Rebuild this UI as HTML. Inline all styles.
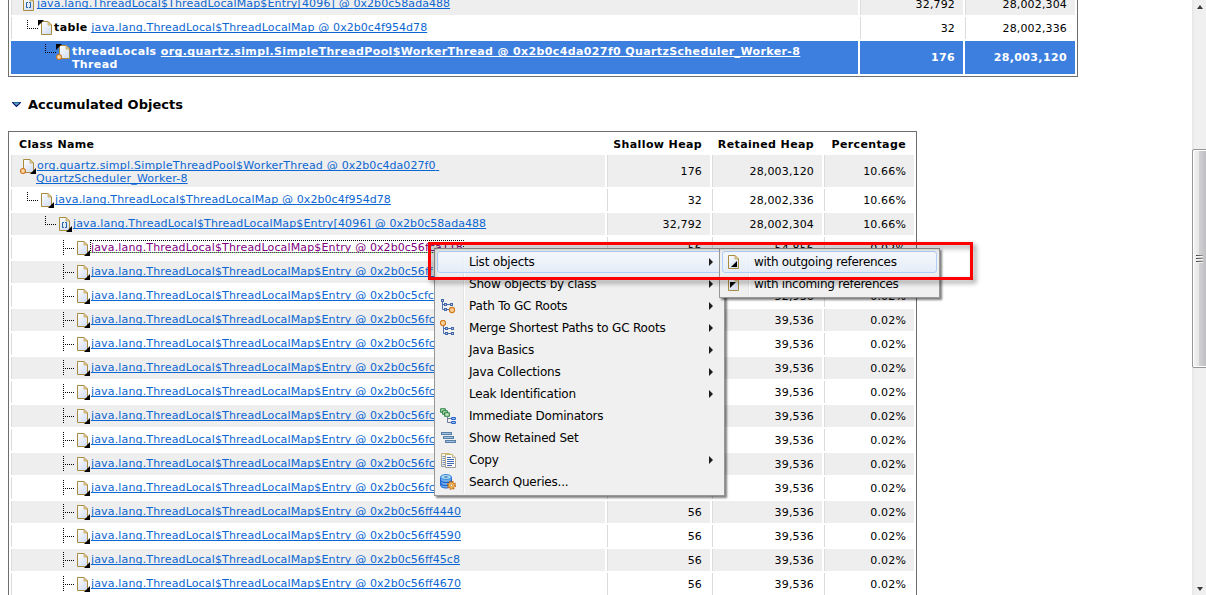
<!DOCTYPE html><html><head><meta charset="utf-8"><title>Accumulated Objects</title><style>
html,body{margin:0;padding:0}
body{width:1206px;height:595px;overflow:hidden;position:relative;background:#fff;font:11px "DejaVu Sans","Liberation Sans",sans-serif;color:#000;letter-spacing:.15px}
table.t{position:absolute;left:8px;border:1px solid #6e6e6e;border-spacing:2px;border-collapse:separate;table-layout:fixed}
#t1{top:-10px;width:1070px}
#t2{top:131px;width:909px}
td,th{padding:0 8px 0 0;border:0;border-left:1px solid #dcdcdc;text-align:right;height:22px;box-sizing:content-box;vertical-align:middle;white-space:nowrap;overflow:hidden}
th{border-color:#fff;font-weight:bold;height:19px;padding-top:1px;box-sizing:border-box;letter-spacing:.37px}
th.l{text-align:left;padding-left:7px}
tr.g td{background:#eee}
tr.two td{height:32px}
#t1 tr.two td{height:33px}
tr.sel td{background:#3d7fdf;border-color:#3d7fdf;color:#fff;font-weight:bold;letter-spacing:.37px}
b{letter-spacing:.37px}
td.n{text-align:left;padding:0 0 0 8px;vertical-align:top}
.c{display:flex;align-items:flex-start;height:16px;margin-top:3px}
tr.two .c{height:26px}
.sp{display:inline-block;flex:none;height:16px}
svg.ic,svg.ln{flex:none;display:block}
.tx{display:block;line-height:13px;padding-top:1px;white-space:nowrap}
a{color:#0c66d2;text-decoration:underline;text-decoration-skip-ink:none;text-underline-offset:1px;text-decoration-thickness:1px}
a.v{color:#800080;position:relative}
a.v::after{content:"";position:absolute;left:0;right:-1px;top:-1px;height:13px;box-sizing:border-box;border:1px dotted #000;border-bottom-color:#5f5}
a.w{letter-spacing:.21px}
.x{letter-spacing:.05px}
tr.sel .x{letter-spacing:inherit}
.tx>a:first-child{padding-left:1px}
tr.sel a{color:#fff}
h2{position:absolute;left:28px;top:97px;margin:0;font:bold 13px "DejaVu Sans","Liberation Sans",sans-serif;letter-spacing:0}
#tri{position:absolute;left:12px;top:102px;display:block}
#menu,#sub{position:absolute;background:#f0f0f0;border:1px solid #979797;padding:2px;box-sizing:border-box;box-shadow:2px 2px 2px rgba(0,0,0,.5);font:12px "DejaVu Sans","Liberation Sans",sans-serif;letter-spacing:-.2px}
#menu{left:434px;top:248px;width:291px;height:248px}
#sub{left:719px;top:248px;width:221px;height:50px;letter-spacing:-.3px}
.gut{position:absolute;left:28px;top:2px;bottom:2px;width:1px;background:#e2e3e3;border-right:1px solid #fff}
.mi{position:relative;height:22px;line-height:21px;box-sizing:border-box;border:1px solid transparent;border-radius:3px}
.mi.hot{border-color:#aecff7;background:linear-gradient(rgba(246,249,254,.8),rgba(226,236,250,.8))}
.ml{position:absolute;left:31px;top:0;white-space:nowrap}
.mic{position:absolute;left:2px;top:2px;width:16px;height:16px}
.mic svg{display:block}
.ar{position:absolute;left:271px;top:6px;width:0;height:0;border-left:4.500px solid #1c1c1c;border-top:4px solid transparent;border-bottom:4px solid transparent}
#red{position:absolute;left:428px;top:242px;width:539px;height:32px;border:3px solid #f00;filter:drop-shadow(3px 3px 2.500px rgba(0,0,0,.42))}
#sb{position:absolute;left:1192px;top:0;width:14px;height:595px;background:linear-gradient(90deg,#e6e6e6,#f0f0f0 3px,#f0f0f0)}
#th{position:absolute;left:0;top:149px;width:16px;height:219px;box-sizing:border-box;border:1px solid #979797;border-radius:2px;background:linear-gradient(90deg,#f5f5f5,#e6e6e6 6px,#d2d2d4 6px,#bcbcc0 14px);box-shadow:inset 1px 1px 0 #fff,inset 0 -1px 0 #fff}
#th i{position:absolute;left:3px;width:7px;height:1px;background:linear-gradient(90deg,#3c3c3c,#9a9a9a);box-shadow:0 1px 0 #f4f4f4}
.sa{position:absolute;left:5px;width:0;height:0;border-left:3.500px solid transparent;border-right:3.500px solid transparent}
#su{top:5px;border-bottom:4px solid #3a3a3a}
#sd{top:587px;border-top:4px solid #3a3a3a}
</style></head><body><svg width="0" height="0" style="position:absolute"><defs>
<linearGradient id="pg" x1="0" y1="0" x2="0.6" y2="1"><stop offset="0" stop-color="#ffffff"/><stop offset="1" stop-color="#d6e0f4"/></linearGradient>
<g id="page"><path d="M3.500 1.500h6.500l3.500 3.500v9.500h-10z" fill="url(#pg)" stroke="#a98b3d"/><path d="M10 1.500v3.500h3.500z" fill="#ecd9a0" stroke="#b89a4a" stroke-width=".7"/></g>
<g id="out"><use href="#page"/><path d="M16 10v6h-6z" fill="#000"/></g>
<g id="in"><use href="#page"/><path d="M0 0h6l-6 6z" fill="#000"/></g>
<g id="dot"><circle cx="3" cy="13" r="2.450" fill="#ffd6a3" stroke="#cb741d" stroke-width="1.100"/></g>
<g id="arr"><path d="M8 6.500H6.500V11.500H8M9 6.500H10.500V11.500H9" stroke="#1f5f9f" stroke-width="1" fill="none"/></g>
<g id="ell"><path d="M7.500 0v9M9 8.500h9" stroke="#000" stroke-width="1" stroke-dasharray="1 1" fill="none"/></g>
<g id="tee"><path d="M7.500 0v16M9 8.500h9" stroke="#000" stroke-width="1" stroke-dasharray="1 1" fill="none"/></g>
</defs></svg><table class="t" id="t1"><colgroup><col><col style="width:103px"><col style="width:110px"></colgroup>
<tr class="g"><td class="n"><div class="c"><span class="sp" style="width:0px"></span><svg class="ic" width="16" height="16" viewBox="0 0 16 16"><use href="#page"/><use href="#arr"/></svg><span class="tx"><a>java.lang.ThreadLocal$ThreadLocalMap$Entry[4096] @ <span class="x">0x2b0c58ada488</span></a></span></div></td><td>32,792</td><td>28,002,304</td></tr>
<tr class="w"><td class="n"><div class="c"><svg class="ln" width="18" height="16" viewBox="0 0 18 16"><use href="#ell"/></svg><svg class="ic" width="16" height="16" viewBox="0 0 16 16"><use href="#in"/></svg><span class="tx"><b>table</b> <a>java.lang.ThreadLocal$ThreadLocalMap @ <span class="x">0x2b0c4f954d78</span></a></span></div></td><td>32</td><td>28,002,336</td></tr>
<tr class="sel two"><td class="n"><div class="c"><span class="sp" style="width:18px"></span><svg class="ln" width="18" height="16" viewBox="0 0 18 16"><use href="#ell"/></svg><svg class="ic" width="16" height="16" viewBox="0 0 16 16"><use href="#in"/><use href="#dot"/></svg><span class="tx"><b>threadLocals</b> <a>org.quartz.simpl.SimpleThreadPool$WorkerThread @ <span class="x">0x2b0c4da027f0</span> QuartzScheduler_Worker-8</a><br><b>Thread</b></span></div></td><td>176</td><td>28,003,120</td></tr>
</table><svg id="tri" width="9" height="5" viewBox="0 0 9 5"><path d="M0 0h9l-4.500 5z" fill="#5aa2ba"/><path d="M0 .500h9" stroke="#1c6c9e"/><path d="M.300 .300l4.200 4.200l4.200-4.200" stroke="#12126e" stroke-width="1.100" fill="none"/></svg><h2>Accumulated Objects</h2><table class="t" id="t2"><colgroup><col><col style="width:103px"><col style="width:110px"><col style="width:90px"></colgroup><tr class="h"><th class="l">Class Name</th><th>Shallow Heap</th><th>Retained Heap</th><th>Percentage</th></tr>
<tr class="g two"><td class="n"><div class="c"><svg class="ic" width="16" height="16" viewBox="0 0 16 16"><use href="#out"/><use href="#dot"/></svg><span class="tx"><a class="w">org.quartz.simpl.SimpleThreadPool$WorkerThread @ <span class="x">0x2b0c4da027f0</span>&nbsp;<br>QuartzScheduler_Worker-8</a></span></div></td><td>176</td><td>28,003,120</td><td>10.66%</td></tr>
<tr class="w"><td class="n"><div class="c"><svg class="ln" width="18" height="16" viewBox="0 0 18 16"><use href="#ell"/></svg><svg class="ic" width="16" height="16" viewBox="0 0 16 16"><use href="#out"/></svg><span class="tx"><a>java.lang.ThreadLocal$ThreadLocalMap @ <span class="x">0x2b0c4f954d78</span></a></span></div></td><td>32</td><td>28,002,336</td><td>10.66%</td></tr>
<tr class="g"><td class="n"><div class="c"><span class="sp" style="width:18px"></span><svg class="ln" width="18" height="16" viewBox="0 0 18 16"><use href="#ell"/></svg><svg class="ic" width="16" height="16" viewBox="0 0 16 16"><use href="#out"/><use href="#arr"/></svg><span class="tx"><a>java.lang.ThreadLocal$ThreadLocalMap$Entry[4096] @ <span class="x">0x2b0c58ada488</span></a></span></div></td><td>32,792</td><td>28,002,304</td><td>10.66%</td></tr>
<tr class="w"><td class="n"><div class="c"><span class="sp" style="width:36px"></span><svg class="ln" width="18" height="16" viewBox="0 0 18 16"><use href="#tee"/></svg><svg class="ic" width="16" height="16" viewBox="0 0 16 16"><use href="#out"/></svg><span class="tx"><a class="v">java.lang.ThreadLocal$ThreadLocalMap$Entry @ <span class="x">0x2b0c56fca118</span></a></span></div></td><td>56</td><td>54,856</td><td>0.02%</td></tr>
<tr class="g"><td class="n"><div class="c"><span class="sp" style="width:36px"></span><svg class="ln" width="18" height="16" viewBox="0 0 18 16"><use href="#tee"/></svg><svg class="ic" width="16" height="16" viewBox="0 0 16 16"><use href="#out"/></svg><span class="tx"><a>java.lang.ThreadLocal$ThreadLocalMap$Entry @ <span class="x">0x2b0c56ff1d40</span></a></span></div></td><td>56</td><td>52,936</td><td>0.02%</td></tr>
<tr class="w"><td class="n"><div class="c"><span class="sp" style="width:36px"></span><svg class="ln" width="18" height="16" viewBox="0 0 18 16"><use href="#tee"/></svg><svg class="ic" width="16" height="16" viewBox="0 0 16 16"><use href="#out"/></svg><span class="tx"><a>java.lang.ThreadLocal$ThreadLocalMap$Entry @ <span class="x">0x2b0c5cfc6ac0</span></a></span></div></td><td>56</td><td>52,936</td><td>0.02%</td></tr>
<tr class="g"><td class="n"><div class="c"><span class="sp" style="width:36px"></span><svg class="ln" width="18" height="16" viewBox="0 0 18 16"><use href="#tee"/></svg><svg class="ic" width="16" height="16" viewBox="0 0 16 16"><use href="#out"/></svg><span class="tx"><a>java.lang.ThreadLocal$ThreadLocalMap$Entry @ <span class="x">0x2b0c56fc0790</span></a></span></div></td><td>56</td><td>39,536</td><td>0.02%</td></tr>
<tr class="w"><td class="n"><div class="c"><span class="sp" style="width:36px"></span><svg class="ln" width="18" height="16" viewBox="0 0 18 16"><use href="#tee"/></svg><svg class="ic" width="16" height="16" viewBox="0 0 16 16"><use href="#out"/></svg><span class="tx"><a>java.lang.ThreadLocal$ThreadLocalMap$Entry @ <span class="x">0x2b0c56fc0ae0</span></a></span></div></td><td>56</td><td>39,536</td><td>0.02%</td></tr>
<tr class="g"><td class="n"><div class="c"><span class="sp" style="width:36px"></span><svg class="ln" width="18" height="16" viewBox="0 0 18 16"><use href="#tee"/></svg><svg class="ic" width="16" height="16" viewBox="0 0 16 16"><use href="#out"/></svg><span class="tx"><a>java.lang.ThreadLocal$ThreadLocalMap$Entry @ <span class="x">0x2b0c56fc0c30</span></a></span></div></td><td>56</td><td>39,536</td><td>0.02%</td></tr>
<tr class="w"><td class="n"><div class="c"><span class="sp" style="width:36px"></span><svg class="ln" width="18" height="16" viewBox="0 0 18 16"><use href="#tee"/></svg><svg class="ic" width="16" height="16" viewBox="0 0 16 16"><use href="#out"/></svg><span class="tx"><a>java.lang.ThreadLocal$ThreadLocalMap$Entry @ <span class="x">0x2b0c56fc0fd8</span></a></span></div></td><td>56</td><td>39,536</td><td>0.02%</td></tr>
<tr class="g"><td class="n"><div class="c"><span class="sp" style="width:36px"></span><svg class="ln" width="18" height="16" viewBox="0 0 18 16"><use href="#tee"/></svg><svg class="ic" width="16" height="16" viewBox="0 0 16 16"><use href="#out"/></svg><span class="tx"><a>java.lang.ThreadLocal$ThreadLocalMap$Entry @ <span class="x">0x2b0c56fc1338</span></a></span></div></td><td>56</td><td>39,536</td><td>0.02%</td></tr>
<tr class="w"><td class="n"><div class="c"><span class="sp" style="width:36px"></span><svg class="ln" width="18" height="16" viewBox="0 0 18 16"><use href="#tee"/></svg><svg class="ic" width="16" height="16" viewBox="0 0 16 16"><use href="#out"/></svg><span class="tx"><a>java.lang.ThreadLocal$ThreadLocalMap$Entry @ <span class="x">0x2b0c56fc1500</span></a></span></div></td><td>56</td><td>39,536</td><td>0.02%</td></tr>
<tr class="g"><td class="n"><div class="c"><span class="sp" style="width:36px"></span><svg class="ln" width="18" height="16" viewBox="0 0 18 16"><use href="#tee"/></svg><svg class="ic" width="16" height="16" viewBox="0 0 16 16"><use href="#out"/></svg><span class="tx"><a>java.lang.ThreadLocal$ThreadLocalMap$Entry @ <span class="x">0x2b0c56fc1858</span></a></span></div></td><td>56</td><td>39,536</td><td>0.02%</td></tr>
<tr class="w"><td class="n"><div class="c"><span class="sp" style="width:36px"></span><svg class="ln" width="18" height="16" viewBox="0 0 18 16"><use href="#tee"/></svg><svg class="ic" width="16" height="16" viewBox="0 0 16 16"><use href="#out"/></svg><span class="tx"><a>java.lang.ThreadLocal$ThreadLocalMap$Entry @ <span class="x">0x2b0c56fc1a20</span></a></span></div></td><td>56</td><td>39,536</td><td>0.02%</td></tr>
<tr class="g"><td class="n"><div class="c"><span class="sp" style="width:36px"></span><svg class="ln" width="18" height="16" viewBox="0 0 18 16"><use href="#tee"/></svg><svg class="ic" width="16" height="16" viewBox="0 0 16 16"><use href="#out"/></svg><span class="tx"><a>java.lang.ThreadLocal$ThreadLocalMap$Entry @ <span class="x">0x2b0c56ff4440</span></a></span></div></td><td>56</td><td>39,536</td><td>0.02%</td></tr>
<tr class="w"><td class="n"><div class="c"><span class="sp" style="width:36px"></span><svg class="ln" width="18" height="16" viewBox="0 0 18 16"><use href="#tee"/></svg><svg class="ic" width="16" height="16" viewBox="0 0 16 16"><use href="#out"/></svg><span class="tx"><a>java.lang.ThreadLocal$ThreadLocalMap$Entry @ <span class="x">0x2b0c56ff4590</span></a></span></div></td><td>56</td><td>39,536</td><td>0.02%</td></tr>
<tr class="g"><td class="n"><div class="c"><span class="sp" style="width:36px"></span><svg class="ln" width="18" height="16" viewBox="0 0 18 16"><use href="#tee"/></svg><svg class="ic" width="16" height="16" viewBox="0 0 16 16"><use href="#out"/></svg><span class="tx"><a>java.lang.ThreadLocal$ThreadLocalMap$Entry @ <span class="x">0x2b0c56ff45c8</span></a></span></div></td><td>56</td><td>39,536</td><td>0.02%</td></tr>
<tr class="w"><td class="n"><div class="c"><span class="sp" style="width:36px"></span><svg class="ln" width="18" height="16" viewBox="0 0 18 16"><use href="#tee"/></svg><svg class="ic" width="16" height="16" viewBox="0 0 16 16"><use href="#out"/></svg><span class="tx"><a>java.lang.ThreadLocal$ThreadLocalMap$Entry @ <span class="x">0x2b0c56ff4670</span></a></span></div></td><td>56</td><td>39,536</td><td>0.02%</td></tr>
</table><div id="menu"><div class="gut"></div>
<div class="mi hot"><span class="ml">List objects</span><span class="ar"></span></div>
<div class="mi"><span class="ml">Show objects by class</span><span class="ar"></span></div>
<div class="mi"><span class="mic"><svg width="16" height="16" viewBox="0 0 16 16"><path d="M2.500 4v7.500h2M2.500 6.500h2M7 6.500h3M7 11.500h2.500" stroke="#4a6fae" fill="none"/><rect x="1.500" y="1.500" width="2" height="2" fill="#b9c9e4" stroke="#4468a8"/><rect x="4.500" y="5.500" width="2" height="2" fill="#b9c9e4" stroke="#4468a8"/><rect x="10.500" y="5.500" width="2" height="2" fill="#b9c9e4" stroke="#4468a8"/><rect x="4.500" y="10.500" width="2" height="2" fill="#b9c9e4" stroke="#4468a8"/><circle cx="12" cy="12" r="2.600" fill="#fdcf96" stroke="#cd7a1c" stroke-width="1.100"/></svg></span><span class="ml">Path To GC Roots</span><span class="ar"></span></div>
<div class="mi"><span class="mic"><svg width="16" height="16" viewBox="0 0 16 16"><path d="M3.500 6v7.500h2M3.500 8.500h2M8 8.500h3M8 13.500h3" stroke="#4a6fae" fill="none"/><rect x="5.500" y="7.500" width="2" height="2" fill="#b9c9e4" stroke="#4468a8"/><rect x="11.500" y="7.500" width="2" height="2" fill="#b9c9e4" stroke="#4468a8"/><rect x="5.500" y="12.500" width="2" height="2" fill="#b9c9e4" stroke="#4468a8"/><rect x="11.500" y="12.500" width="2" height="2" fill="#b9c9e4" stroke="#4468a8"/><circle cx="3" cy="3" r="2.600" fill="#fdcf96" stroke="#cd7a1c" stroke-width="1.100"/></svg></span><span class="ml">Merge Shortest Paths to GC Roots</span><span class="ar"></span></div>
<div class="mi"><span class="ml">Java Basics</span><span class="ar"></span></div>
<div class="mi"><span class="ml">Java Collections</span><span class="ar"></span></div>
<div class="mi"><span class="ml">Leak Identification</span><span class="ar"></span></div>
<div class="mi"><span class="mic"><svg width="16" height="16" viewBox="0 0 16 16"><path d="M7.500 9v5.500h4M7.500 10.500h4" stroke="#6a7a9c" fill="none"/><rect x="0.700" y="0.700" width="4.600" height="3.600" rx=".4" fill="#cdeabb" stroke="#1f7c40" stroke-width="1.100"/><rect x="2.700" y="2.700" width="4.600" height="3.600" rx=".4" fill="#cdeabb" stroke="#1f7c40" stroke-width="1.100"/><rect x="4.700" y="4.700" width="4.600" height="3.600" rx=".4" fill="#cdeabb" stroke="#1f7c40" stroke-width="1.100"/><rect x="11.500" y="9.500" width="4" height="2" rx=".3" fill="#8fc0f2" stroke="#2a60c4"/><rect x="11.500" y="13.500" width="4" height="2" rx=".3" fill="#8fc0f2" stroke="#2a60c4"/></svg></span><span class="ml">Immediate Dominators</span></div>
<div class="mi"><span class="mic"><svg width="16" height="16" viewBox="0 0 16 16"><rect x="1.500" y="2.500" width="10" height="2" fill="#9dbfe0" stroke="#5a80a8"/><rect x="3.500" y="6.500" width="10" height="2" fill="#9dbfe0" stroke="#5a80a8"/><rect x="5.500" y="10.500" width="10" height="2" fill="#9dbfe0" stroke="#5a80a8"/></svg></span><span class="ml">Show Retained Set</span></div>
<div class="mi"><span class="mic"><svg width="16" height="16" viewBox="0 0 16 16"><defs><linearGradient id="cg" x1="0" y1="0" x2="0" y2="1"><stop offset="0" stop-color="#c9b272"/><stop offset="1" stop-color="#9c9c9c"/></linearGradient></defs><path d="M1.500 1.500h8v13h-8z" fill="#f4f1e6" stroke="url(#cg)"/><path d="M2.500 4.500h3M2.500 6.500h3M2.500 8.500h3M2.500 10.500h3M2.500 12.500h3" stroke="#6f8fc4"/><path d="M5.500 2.500h7l3 3v10h-10z" fill="#fdfdfd" stroke="url(#cg)"/><path d="M12.500 2.500v3h3" fill="#efe6c6" stroke="url(#cg)" stroke-width=".8"/><path d="M7 5.500h4M7 7.500h7M7 9.500h7M7 11.500h7M7 13.500h5" stroke="#3f66b0"/></svg></span><span class="ml">Copy</span><span class="ar"></span></div>
<div class="mi"><span class="mic"><svg width="16" height="16" viewBox="0 0 16 16"><path d="M.600 3v8.500c0 1.400 2.400 2.500 5.400 2.500s5.400-1.100 5.400-2.500v-8.500z" fill="#6fb0ea" stroke="#1f5fd0" stroke-width="1"/><path d="M.600 6c0 1.400 2.400 2.500 5.400 2.500s5.400-1.100 5.400-2.500M.600 9c0 1.400 2.400 2.500 5.400 2.500s5.400-1.100 5.400-2.500" fill="none" stroke="#1f5fd0" stroke-width="1.200"/><ellipse cx="6" cy="3" rx="5.400" ry="2.500" fill="#a5d6f2" stroke="#3f8fdc" stroke-width="1"/><path d="M4.500 3h3" stroke="#2a4f9a" stroke-width="1"/><circle cx="11.500" cy="11.300" r="3.900" fill="none" stroke="#c9701c" stroke-width="1.400" stroke-dasharray="1.700 1.360"/><circle cx="11.500" cy="11.300" r="3.100" fill="#f9c85e" stroke="#c9701c" stroke-width=".9"/><circle cx="11.500" cy="11.300" r="1.200" fill="#fff" stroke="#b5651a" stroke-width=".7"/></svg></span><span class="ml">Search Queries...</span></div>
</div><div id="sub"><div class="gut"></div>
<div class="mi hot"><span class="mic"><svg width="16" height="16" viewBox="0 0 16 16"><use href="#page"/><path d="M12 7v6h-6z" fill="#000"/></svg></span><span class="ml">with outgoing references</span></div>
<div class="mi"><span class="mic"><svg width="16" height="16" viewBox="0 0 16 16"><use href="#page"/><path d="M5 6h6l-6 6z" fill="#000"/></svg></span><span class="ml">with incoming references</span></div>
</div><div id="red"></div><div id="sb"><div class="sa" id="su"></div><div id="th"><i style="top:105px"></i><i style="top:108px"></i><i style="top:111px"></i></div><div class="sa" id="sd"></div></div></body></html>
